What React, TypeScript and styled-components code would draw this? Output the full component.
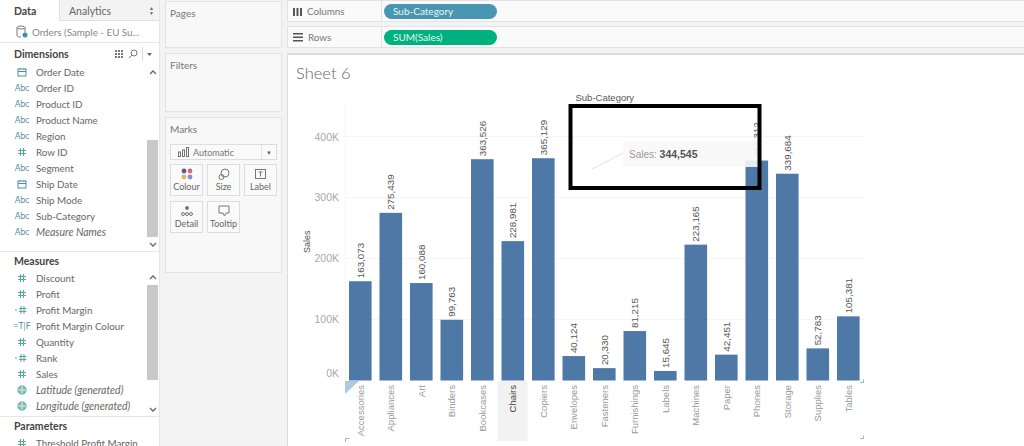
import React from "react";
import styled, { createGlobalStyle } from "styled-components";

const Global = createGlobalStyle`
  html, body { margin: 0; padding: 0; background: #fff; }
  body { font-family: Lato, "Liberation Sans", Arial, sans-serif; overflow: hidden; }
`;

const Page = styled.div`
  width: 1024px; height: 446px; display: flex; overflow: hidden; background: #f3f3f3; color: #666;
`;
const DataPane = styled.aside`
  width: 159px; flex: none; height: 446px; background: #fff; border-right: 1px solid #e6e6e6; display: flex; flex-direction: column; overflow: hidden;
`;
const Tabs = styled.div`
  height: 21px; display: flex; flex: none; font-size: 10.5px; align-items: stretch;
`;
const DataTab = styled.div`
  width: 59px; font-weight: 700; color: #444; padding: 5px 0 0 14px; box-sizing: border-box;
`;
const AnalyticsTab = styled.div`
  flex: 1; background: #f3f3f3; border-left: 1px solid #e0e0e0; border-bottom: 1px solid #e0e0e0; padding: 5px 5px 0 9px; display: flex; justify-content: space-between; color: #666;
`;
const Spin = styled.span`
  font-size: 5px; line-height: 5px; color: #666; margin-top: 1px; text-align: center;
`;
const Source = styled.div`
  height: 21px; flex: none; display: flex; align-items: center; gap: 4px; padding-left: 16px; font-size: 9.8px; color: #888; border-bottom: 1px solid #e6e6e6;
`;
const SectionHead = styled.div<{ $h: number }>`
  height: ${p => p.$h}px; flex: none; display: flex; align-items: center; justify-content: space-between; padding: 0 6px 0 14px; font-size: 10.5px; font-weight: 700; color: #444;
`;
const HeadTools = styled.div`
  display: flex; align-items: center; gap: 3px; color: #888;
`;
const FieldArea = styled.div<{ $h: number }>`
  height: ${p => p.$h}px; flex: none; display: flex; overflow: hidden;
`;
const FieldList = styled.div`
  flex: 1; min-width: 0;
`;
const Field = styled.div<{ $italic?: boolean }>`
  height: 16px; flex: none; display: flex; align-items: center; font-size: ${p => (p.$italic ? "10.5px" : "9.8px")}; color: #666; font-style: ${p => (p.$italic ? "italic" : "normal")}; white-space: nowrap;
`;
const FieldIcon = styled.span<{ $c: string }>`
  width: 36px; flex: none; display: flex; justify-content: center; box-sizing: border-box; padding-left: 8px; font-size: 8.5px; color: ${p => p.$c}; font-style: normal;
`;
const Track = styled.div`
  width: 11px; margin-right: 1px; flex: none; display: flex; flex-direction: column;
`;
const Arrow = styled.div<{ $h: number }>`
  height: ${p => p.$h}px; flex: none; display: flex; align-items: center; justify-content: center;
`;
const TrackSpace = styled.div<{ $h: number }>`
  height: ${p => p.$h}px; flex: none;
`;
const Thumb = styled.div<{ $h: number }>`
  height: ${p => p.$h}px; flex: none; background: #c8c8c8;
`;
const Divider = styled.div`
  height: 1px; background: #e6e6e6; flex: none;
`;
const Shelves = styled.div`
  width: 117px; flex: none; margin-left: 5px; display: flex; flex-direction: column; gap: 5px; padding-top: 1px; box-sizing: border-box;
`;
const Card = styled.section<{ $h: number }>`
  height: ${p => p.$h}px; flex: none; box-sizing: border-box; background: #f8f8f8; border: 1px solid #e3e3e3; font-size: 10px; color: #777; padding: 5px 4px;
`;
const Dropdown = styled.div`
  margin: 9px 0 4px 0; height: 16px; box-sizing: border-box; background: #fafafa; border: 1px solid #ddd; display: flex; align-items: center; font-size: 9px; color: #777; padding-left: 7px; gap: 4px;
`;
const Caret = styled.span`
  margin-left: auto; width: 14px; height: 100%; border-left: 1px solid #e0e0e0; display: flex; align-items: center; justify-content: center; font-size: 6px; color: #666;
`;
const MarkGrid = styled.div`
  display: grid; grid-template-columns: repeat(3, 33px); column-gap: 4px; row-gap: 5px;
`;
const MarkBtn = styled.div`
  height: 32px; box-sizing: border-box; background: #fafafa; border: 1px solid #ddd; display: flex; flex-direction: column; align-items: center; justify-content: space-between; font-size: 9px; line-height: 12px; color: #666; padding: 3px 0 2px;
`;
const Main = styled.main`
  flex: 1; min-width: 0; margin-left: 5px; display: flex; flex-direction: column; gap: 4px;
`;
const Shelf = styled.div`
  height: 22px; flex: none; box-sizing: border-box; background: #fafafa; border: 1px solid #e2e2e2; border-right: none; display: flex; align-items: center;
`;
const ShelfLabel = styled.div`
  width: 94px; height: 100%; flex: none; box-sizing: border-box; border-right: 1px solid #e0e0e0; display: flex; align-items: center; gap: 5px; padding-left: 5px; font-size: 9.8px; color: #777;
`;
const Pill = styled.div<{ $c: string }>`
  width: 113px; height: 15px; margin-left: 2px; border-radius: 8px; background: ${p => p.$c}; color: #e8f4f0; font-size: 10px; line-height: 15px; padding-left: 9px; box-sizing: border-box;
`;
const Sheet = styled.div`
  flex: 1; min-height: 0; background: #fff; border: 1px solid #dcdcdc; border-right: none; border-bottom: none; border-top-width: 2px; position: relative; margin-top: 1px;
`;
const Title = styled.h1`
  margin: 0; font-weight: 300; font-size: 16.5px; color: #666; padding: 8px 0 0 8px; line-height: 20px;
`;
const ChartSvg = styled.svg`
  position: absolute; left: -1px; top: -55px; display: block; overflow: visible;
`;

const Hash = ({ c = "#5aa893" }: { c?: string }) => (
  <svg width="10" height="10" viewBox="0 0 10 10" fill="none" stroke={c} strokeWidth="1">
    <path d="M3.500 1v8M6.500 1v8M1 3.500h8M1 6.500h8" />
  </svg>
);
const Cal = () => (
  <svg width="10" height="10" viewBox="0 0 10 10" fill="none" stroke="#4a8fa8" strokeWidth="1">
    <rect x="1" y="2" width="8" height="7" />
    <path d="M1 4.500h8M3 1v1.500M7 1v1.500" />
  </svg>
);
const Globe = () => (
  <svg width="10" height="10" viewBox="0 0 10 10" fill="#7cc0ad" stroke="#4f9d8c" strokeWidth=".7">
    <circle cx="5" cy="5" r="4.200" />
    <path d="M1 5h8M5 1v8" fill="none" stroke="#fff" />
  </svg>
);
const Calc = () => (
  <svg width="14" height="10" viewBox="0 0 14 10" fill="none" stroke="#5aa893" strokeWidth="1">
    <path d="M0 5h2M6 1v8M9 1v8M4 3.500h7.500M4 6.500h7.500" />
  </svg>
);

type Kind = "abc" | "hash" | "cal" | "globe" | "calc" | "tf";
const iconFor = (k: Kind) => {
  if (k === "abc") return <FieldIcon $c="#4a8fa8">Abc</FieldIcon>;
  if (k === "hash") return <FieldIcon $c="#4f9d8c"><Hash /></FieldIcon>;
  if (k === "cal") return <FieldIcon $c="#4a8fa8"><Cal /></FieldIcon>;
  if (k === "globe") return <FieldIcon $c="#4f9d8c"><Globe /></FieldIcon>;
  if (k === "calc") return <FieldIcon $c="#4f9d8c"><Calc /></FieldIcon>;
  return <FieldIcon $c="#4a8fa8">=T|F</FieldIcon>;
};

const dims: [string, Kind, boolean?][] = [
  ["Order Date", "cal"], ["Order ID", "abc"], ["Product ID", "abc"], ["Product Name", "abc"], ["Region", "abc"],
  ["Row ID", "hash"], ["Segment", "abc"], ["Ship Date", "cal"], ["Ship Mode", "abc"], ["Sub-Category", "abc"], ["Measure Names", "abc", true],
];
const meas: [string, Kind, boolean?][] = [
  ["Discount", "hash"], ["Profit", "hash"], ["Profit Margin", "calc"], ["Profit Margin Colour", "tf"], ["Quantity", "hash"],
  ["Rank", "calc"], ["Sales", "hash"], ["Latitude (generated)", "globe", true], ["Longitude (generated)", "globe", true],
];

const Up = () => (
  <svg width="8" height="5" viewBox="0 0 8 5" fill="none" stroke="#666" strokeWidth="1.300"><path d="M1 4l3-3 3 3" /></svg>
);
const Down = () => (
  <svg width="8" height="5" viewBox="0 0 8 5" fill="none" stroke="#666" strokeWidth="1.300"><path d="M1 1l3 3 3-3" /></svg>
);

const bars: [string, number][] = [
  ["Accessories", 163073], ["Appliances", 275439], ["Art", 160088], ["Binders", 99763], ["Bookcases", 363526],
  ["Chairs", 228981], ["Copiers", 365129], ["Envelopes", 40124], ["Fasteners", 20330], ["Furnishings", 81215],
  ["Labels", 15645], ["Machines", 223165], ["Paper", 42451], ["Phones", 361312], ["Storage", 339684],
  ["Supplies", 52783], ["Tables", 105381],
];
const y0 = 380.5;
const scale = 243.5 / 400000;
const fmt = (n: number) => n.toLocaleString("en-US");

const Chart = () => (
  <ChartSvg width="738" height="446" viewBox="287 0 738 446" fontFamily="Liberation Sans, Arial, sans-serif">
    {[136.5, 197.5, 258.5, 319.5].map(y => (
      <line key={y} x1="346" x2="864" y1={y} y2={y} stroke="#f5f5f5" />
    ))}
    <line x1="345.500" x2="345.500" y1="104" y2="381" stroke="#f5f5f5" />
    {([["400K", 141], ["300K", 201], ["200K", 262], ["100K", 323], ["0K", 377]] as [string, number][]).map(([t, y]) => (
      <text key={t} x="339" y={y} fontSize="10.500" fill="#a8a8a8" textAnchor="end">{t}</text>
    ))}
    <text transform="translate(310,253) rotate(-90)" fontSize="9" fill="#555">Sales</text>
    <text x="575.500" y="101" fontSize="9.500" fill="#555">Sub-Category</text>
    <rect x="497.500" y="381" width="30" height="60" fill="#f2f2f2" />
    {bars.map(([name, v], i) => {
      const x = 349 + i * 30.5;
      const top = y0 - v * scale;
      const cx = x + 11.3;
      return (
        <g key={name}>
          <rect x={x} y={top} width="22.600" height={y0 - top} fill="#4e79a7" />
          <text transform={`translate(${cx + 3.5},${top - 3}) rotate(-90)`} fontSize="9.800" fill="#555">
            {fmt(v)}
          </text>
          <text transform={`translate(${cx + 3.5},385) rotate(-90)`} fontSize="9.500" fill={name === "Chairs" ? "#444" : "#999"} textAnchor="end">
            {name}
          </text>
        </g>
      );
    })}
    <path d="M345 381h14l-14 13z" fill="#a9cbe6" />
    <path d="M345.500 442v-3.500h4M860 382.500h3.500v-3M860 438.500h3.500v-3" fill="none" stroke="#9db4c6" />
    <path d="M592 169l31-16" stroke="#e4e4e4" fill="none" />
    <rect x="623" y="141" width="135" height="26" fill="#f8f8f8" fillOpacity=".9" />
    <text x="629" y="158" fontSize="10" fill="#999">Sales: <tspan fontWeight="700" fill="#555" fontSize="10.500">344,545</tspan></text>
    <rect x="570.500" y="106" width="189" height="82" fill="none" stroke="#000" strokeWidth="4" />
  </ChartSvg>
);

export default function App() {
  return (
    <Page>
      <Global />
      <DataPane>
        <Tabs>
          <DataTab>Data</DataTab>
          <AnalyticsTab>Analytics<Spin>▲<br />▼</Spin></AnalyticsTab>
        </Tabs>
        <Source>
          <svg width="12" height="13" viewBox="0 0 12 13" fill="none" stroke="#777" strokeWidth="1">
            <ellipse cx="5" cy="2.500" rx="4" ry="1.500" />
            <path d="M1 2.500v8c0 1 2 1.500 4 1.500M9 2.500v5" />
            <circle cx="9" cy="10" r="2.500" fill="#3f8fb0" stroke="none" />
          </svg>
          Orders (Sample - EU Su...
        </Source>
        <SectionHead $h="21">
          Dimensions
          <HeadTools>
            <svg width="10" height="8" viewBox="0 0 10 8" fill="#777"><path d="M0 0h2v2H0zM3 0h2v2H3zM6 0h2v2H6zM0 3h2v2H0zM3 3h2v2H3zM6 3h2v2H6zM0 6h2v2H0zM3 6h2v2H3zM6 6h2v2H6z" /></svg>
            <svg width="10" height="10" viewBox="0 0 10 10" fill="none" stroke="#777"><circle cx="6" cy="4" r="3" /><path d="M3.800 6.200L1 9" /></svg>
            <svg width="12" height="14" viewBox="0 0 12 14"><path d="M1.500 0v14" stroke="#ddd" /><path d="M6 6h5l-2.500 3z" fill="#666" /></svg>
          </HeadTools>
        </SectionHead>
        <FieldArea $h="187">
          <FieldList>
            {dims.map(([n, k, it]) => <Field key={n} $italic={it}>{iconFor(k)}{n}</Field>)}
          </FieldList>
          <Track>
            <Arrow $h="16"><Up /></Arrow>
            <TrackSpace $h="60" />
            <Thumb $h="97" />
            <Arrow $h="14"><Down /></Arrow>
          </Track>
        </FieldArea>
        <Divider />
        <SectionHead $h="18">Measures</SectionHead>
        <FieldArea $h="146">
          <FieldList>
            {meas.map(([n, k, it]) => <Field key={n} $italic={it}>{iconFor(k)}{n}</Field>)}
          </FieldList>
          <Track>
            <Arrow $h="15"><Up /></Arrow>
            <Thumb $h="95" />
            <TrackSpace $h="22" />
            <Arrow $h="14"><Down /></Arrow>
          </Track>
        </FieldArea>
        <Divider />
        <SectionHead $h="18">Parameters</SectionHead>
        <Field>{iconFor("hash")}Threshold Profit Margin</Field>
      </DataPane>
      <Shelves>
        <Card $h="47">Pages</Card>
        <Card $h="59">Filters</Card>
        <Card $h="156">
          Marks
          <Dropdown>
            <svg width="11" height="10" viewBox="0 0 11 10" fill="none" stroke="#666" strokeWidth=".9"><rect x=".5" y="5" width="2" height="4.500" /><rect x="4.500" y="3" width="2" height="6.500" /><rect x="8.500" y=".5" width="2" height="9" /></svg>
            Automatic
            <Caret>▼</Caret>
          </Dropdown>
          <MarkGrid>
            <MarkBtn>
              <svg width="12" height="12" viewBox="0 0 12 12"><circle cx="3" cy="3" r="2.400" fill="#5d5a8a" /><circle cx="9" cy="3" r="2.400" fill="#e0607a" /><circle cx="3" cy="9" r="2.400" fill="#e8b060" /><circle cx="9" cy="9" r="2.400" fill="#7a94c8" /></svg>
              Colour
            </MarkBtn>
            <MarkBtn>
              <svg width="12" height="12" viewBox="0 0 12 12" fill="none" stroke="#777"><circle cx="7" cy="5" r="4" /><circle cx="3.500" cy="9" r="2.500" /></svg>
              Size
            </MarkBtn>
            <MarkBtn>
              <svg width="12" height="12" viewBox="0 0 12 12" fill="none" stroke="#777"><rect x=".5" y="1.500" width="10" height="9" /><path d="M3.500 4h4M5.500 4v4.500" /></svg>
              Label
            </MarkBtn>
            <MarkBtn>
              <svg width="12" height="12" viewBox="0 0 12 12" fill="none" stroke="#777"><circle cx="6" cy="3" r="1.500" fill="#777" /><circle cx="2" cy="9" r="1.500" /><circle cx="6" cy="9" r="1.500" /><circle cx="10" cy="9" r="1.500" /></svg>
              Detail
            </MarkBtn>
            <MarkBtn>
              <svg width="12" height="12" viewBox="0 0 12 12" fill="none" stroke="#777"><path d="M1 1h10v7H8l-1.500 3L5 8H1z" /></svg>
              Tooltip
            </MarkBtn>
          </MarkGrid>
        </Card>
      </Shelves>
      <Main>
        <Shelf>
          <ShelfLabel>
            <svg width="9" height="9" viewBox="0 0 9 9" fill="#555"><path d="M0 1h2v8H0zM3.500 1h2v8h-2zM7 1h2v8H7z" /></svg>
            Columns
          </ShelfLabel>
          <Pill $c="#4996b2">Sub-Category</Pill>
        </Shelf>
        <Shelf>
          <ShelfLabel>
            <svg width="10" height="9" viewBox="0 0 10 9" fill="#555"><path d="M0 0h10v1.500H0zM0 3.500h10V5H0zM0 7h10v1.500H0z" /></svg>
            Rows
          </ShelfLabel>
          <Pill $c="#00b180">SUM(Sales)</Pill>
        </Shelf>
        <Sheet>
          <Title>Sheet 6</Title>
          <Chart />
        </Sheet>
      </Main>
    </Page>
  );
}
